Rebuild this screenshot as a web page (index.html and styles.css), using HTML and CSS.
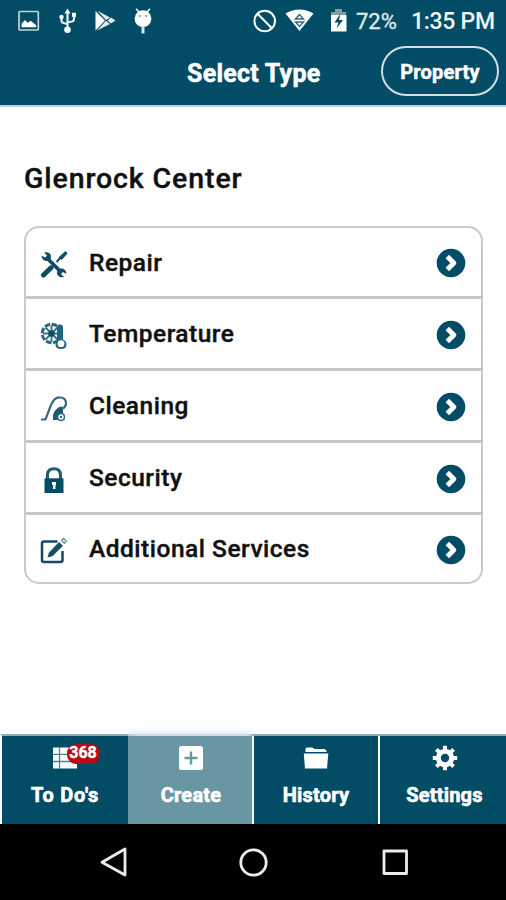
FILE: index.html
```html
<!DOCTYPE html>
<html lang="en">
<head>
<meta charset="utf-8">
<title>Select Type</title>
<link rel="stylesheet" href="styles.css">
</head>
<body>
<svg width="0" height="0" class="defs">
  <symbol id="go" viewBox="0 0 30 30"><circle cx="15" cy="15" r="14.3" fill="#034c66"/><path d="M11.300 8.500l6.500 6.500-6.500 6.500" fill="none" stroke="#fff" stroke-width="5" stroke-linejoin="round"/></symbol>
</svg>
<header class="top">
  <div class="status">
    <svg class="notifications" width="160" height="40" viewBox="0 0 160 40">
      <rect x="19" y="11.500" width="19.300" height="18.500" rx="1" fill="none" stroke="#c2d3da" stroke-width="1.700"/>
      <path d="M21.500 27.300v-3.500l3.500-3.800 2.700 2.800 3-2 5.500 4.500v2z" fill="#fff"/>
      <g fill="none" stroke="#e6eef1" stroke-width="2.200"><path d="M67.500 11v18M61.500 17v3.500q0 2 2 2.500l4 1M74 15v4q0 2-2 2.500l-4.500 1"/></g>
      <path d="M64.500 13.500l3-5 3 5z" fill="#fff"/><circle cx="67.500" cy="29.700" r="3.300" fill="#fff"/><circle cx="61.500" cy="17" r="2.200" fill="#fff"/><path d="M72 12.800h4v4h-4z" fill="#fff"/>
      <path d="M95.500 11v19.500l9.500-10z" fill="#fff"/><path d="M97.500 10.800l12.500 6.700-4 2.500zM97 30.500l13-6.500-4-3.200zM107.500 20.500l3.500-3 4.500 3-4.500 3z" fill="#dfe9ed"/>
      <circle cx="143" cy="18.700" r="8.400" fill="#fff"/><path d="M138.700 12l-2.500-3.200M147.300 12l2.500-3.200" stroke="#fff" stroke-width="1.500"/><path d="M143 26v7.500" stroke="#d6e2e7" stroke-width="3"/><circle cx="139.800" cy="16" r="1" fill="#6e8e9b"/><circle cx="146.200" cy="16" r="1" fill="#6e8e9b"/>
    </svg>
    <svg class="system" width="104" height="40" viewBox="250 0 104 40">
      <circle cx="264.700" cy="21" r="10.300" fill="none" stroke="#fff" stroke-width="2"/><path d="M257.500 13.800l14.400 14.400" stroke="#fff" stroke-width="2"/>
      <path d="M285.500 13.500q14-8 28 0L299.500 31z" fill="#fff"/><path d="M295.500 19l4-4.500 4 4.500zM295.500 22h8l-4 4.500z" fill="none" stroke="#31677c" stroke-width="1.400"/>
      <path d="M335 9h7v3h4v6h-15v-6h4z" fill="#7f9ea9"/><path d="M331 15h15.500v16.500H331z" fill="#fff"/><path d="M340.500 13.500l-6 9h4l-2 6 6.500-8.500h-4z" fill="#034c66"/>
    </svg>
    <span class="battery">72%</span>
    <span class="clock">1:35 PM</span>
  </div>
  <div class="bar">
    <h1>Select Type</h1>
    <button class="property">Property</button>
  </div>
</header>
<main>
  <h2>Glenrock Center</h2>
  <ul class="types">
    <li>
      <svg class="kind" width="28" height="28" viewBox="0 0 28 28"><path d="M8 9l12 12" stroke="#124a65" stroke-width="3.800"/><path d="M4 2.500q6-1 7 3.500l-.5 4L7 11Q2 11 1.500 5.500L5 7.500 7 5.500zM24 27q-6 1-7-3.500l.5-4L21 18.500q5 0 5.500 5.500L23 22l-2 2z" fill="#124a65"/><path d="M3.500 25l7.500-7.200" stroke="#124a65" stroke-width="5" stroke-linecap="round"/><path d="M16.500 12l4-4.500" stroke="#124a65" stroke-width="2"/><path d="M19 7.500L25.500 1.500l1.500 2L21.500 9.500z" fill="#124a65" stroke="#124a65"/></svg>
      <span>Repair</span><svg class="go"><use href="#go"/></svg>
    </li>
    <li>
      <svg class="kind" width="28" height="28" viewBox="0 0 28 28"><circle cx="11.500" cy="11.500" r="9.300" fill="none" stroke="#2c6a82" stroke-width="3" stroke-dasharray="5.700 1.600"/><path d="M11.500 3v17M3 11.500h17M5.500 5.500l12 12M17.500 5.500l-12 12" stroke="#397187" stroke-width="1.900"/><circle cx="11.500" cy="11.500" r="3.200" fill="#124a65"/><path d="M17 5q0-2.500 3-2.500T23 5v12.500q3.500 1.500 3.500 5 0 4.500-5.500 4.500t-5.500-4.500q0-2.500 1.500-4z" fill="#216680"/><circle cx="21" cy="21.700" r="3.400" fill="#fff"/></svg>
      <span>Temperature</span><svg class="go"><use href="#go"/></svg>
    </li>
    <li>
      <svg class="kind" width="28" height="28" viewBox="0 0 28 28"><path d="M1 25.500h4.500L11 11Q14.500 3 20 3.500q6.500 0 6 7-1 2.500-3 4" fill="none" stroke="#376980" stroke-width="2.200"/><path d="M13 26v-5q2-7 8-8.500 2 0 2 3v4l1.500 1v5.500z" fill="#185c76"/><circle cx="21" cy="23" r="3.400" fill="#fff" stroke="#286880" stroke-width="1.500"/><path d="M20 22h2v2h-2z" fill="#286880"/></svg>
      <span>Cleaning</span><svg class="go"><use href="#go"/></svg>
    </li>
    <li>
      <svg class="kind" width="28" height="28" viewBox="0 0 28 28"><path d="M7.500 13V9q0-6.200 6.500-6.200T20.500 9v4" fill="none" stroke="#245b72" stroke-width="3"/><path d="M4.500 12.300h19V27h-19z" fill="#034c66"/><path d="M12 16h4v2.500l-.5 1V23h-2.500v-4H12z" fill="#fff"/></svg>
      <span>Security</span><svg class="go"><use href="#go"/></svg>
    </li>
    <li>
      <svg class="kind" width="28" height="28" viewBox="0 0 28 28"><path d="M17.500 4.500H4Q2 4.500 2 6.500V23q0 2 2 2h16.500q2 0 2-2v-9" fill="none" stroke="#164964" stroke-width="2.500"/><path d="M7.500 20.500l1.300-4.700L19 5l4 3.700L12.500 19.300z" fill="#174e68"/><path d="M21.500 3.500l2-2 2.800 2.800-2 2z" fill="none" stroke="#608da0" stroke-width="1.300"/></svg>
      <span>Additional Services</span><svg class="go"><use href="#go"/></svg>
    </li>
  </ul>
</main>
<nav class="tabs">
  <a class="tab">
    <span class="icon"><svg width="26" height="26" viewBox="0 0 26 26"><path d="M1 2.500h24v21H1z" fill="#fff"/><path d="M7.500 2v22M1 9.300h24M1 16.500h24" stroke="#4f8193" stroke-width="1.300"/></svg><b class="badge">368</b></span>
    <span class="label todo">To Do's</span>
  </a>
  <a class="tab active">
    <span class="icon"><svg width="26" height="26" viewBox="0 0 26 26"><rect x="1" y="1" width="24" height="24" rx="2.500" fill="#fff"/><path d="M13 6.500v13M6.500 13h13" stroke="#6896a3" stroke-width="2.400"/></svg></span>
    <span class="label">Create</span>
  </a>
  <a class="tab">
    <span class="icon"><svg width="26" height="26" viewBox="0 0 26 26"><path d="M2.500 6V4q0-1.500 1.500-1.500h5q1.500 0 2.200 1.500H21q2 0 2.500 2v1H2.500z" fill="#fff"/><path d="M.8 8.500h24.500L24 23.500H2z" fill="#fff"/></svg></span>
    <span class="label">History</span>
  </a>
  <a class="tab settings">
    <span class="icon"><svg width="26" height="26" viewBox="0 0 26 26"><circle cx="13" cy="13" r="6.700" fill="none" stroke="#fff" stroke-width="5"/><g stroke="#fff" stroke-width="4"><path d="M13 .8v4M13 21.200v4M.8 13h4M21.200 13h4M4.400 4.400l2.800 2.800M18.800 18.800l2.800 2.800M4.400 21.600l2.800-2.800M18.800 7.200l2.800-2.800"/></g></svg></span>
    <span class="label">Settings</span>
  </a>
</nav>
<footer class="system-nav">
  <svg width="506" height="76" viewBox="0 0 506 76" fill="none" stroke="#ececec" stroke-width="2.800" stroke-linejoin="round">
    <path d="M125 25v26L102 38.300z"/><circle cx="253.500" cy="38.500" r="12.700"/><rect x="384" y="27" width="22.500" height="22.500"/>
  </svg>
</footer>
</body>
</html>
```
FILE: styles.css
```css
* { box-sizing: border-box; }
body {
  margin: 0;
  width: 506px;
  height: 900px;
  display: flex;
  flex-direction: column;
  overflow: hidden;
  background: #fff;
  font-family: Roboto, "Liberation Sans", sans-serif;
}
svg { display: block; flex: none; }
.defs { position: absolute; }
.top {
  height: 107px;
  background: #034c66;
  border-bottom: 2px solid #c5cfd6;
  color: #fff;
}
.status { height: 40px; display: flex; align-items: center; }
.system { margin-left: 90px; }
.battery { width: 57px; padding: 3px 0 0 2px; font-size: 22px; line-height: 26px; color: #e0e9ed; -webkit-text-stroke: 0.3px; white-space: nowrap; }
.clock { padding-top: 3px; font-size: 23px; line-height: 26px; font-weight: 500; letter-spacing: -0.3px; color: #f0f5f7; white-space: nowrap; }
.bar {
  height: 65px;
  padding: 6px 7px 0 0;
  display: grid;
  grid-template-columns: 381px 118px;
}
h1 { margin: 0; padding: 12px 0 0 187px; font-size: 25px; line-height: 31px; font-weight: 700; letter-spacing: 0.25px; -webkit-text-stroke: 0.5px; white-space: nowrap; }
.property {
  height: 50px;
  padding: 2px 0 0;
  border: 2px solid #d2dfe4;
  border-radius: 25px;
  background: none;
  color: #fff;
  font: 700 20px/44px Roboto, "Liberation Sans", sans-serif;
  letter-spacing: 0.2px;
  -webkit-text-stroke: 0.5px;
}
main { height: 627px; padding: 55px 23px 0 24px; }
h2 { margin: 0; font-size: 28.500px; line-height: 33px; font-weight: 500; letter-spacing: 0.9px; color: #111; -webkit-text-stroke: 0.4px; white-space: nowrap; }
.types {
  list-style: none;
  margin: 31px 0 0;
  padding: 0;
  height: 358px;
  display: grid;
  grid-template-rows: 71px 72px 72px 72px 1fr;
  border: 2px solid #c9c9c9;
  border-radius: 15px;
}
.types li {
  display: grid;
  grid-template-columns: 49px 1fr 30px;
  align-items: center;
  padding: 2px 15px 0 14px;
  border-bottom: 3px solid #c6c6c6;
}
.types li:last-child { border-bottom: 0; }
.types span { margin-top: -1px; font-size: 24.500px; line-height: 30px; font-weight: 500; letter-spacing: 0.5px; color: #111; -webkit-text-stroke: 0.4px; white-space: nowrap; }
.kind { margin-top: 3px; }
.types li:first-child .kind { margin-top: 2px; }
.go { width: 30px; height: 30px; }
.tabs {
  height: 90px;
  display: grid;
  grid-template-columns: 126px 124px 126px 1fr;
  border-top: 2px solid #8eafba;
  border-left: 2px solid #fff;
  background: #034c66;
}
.tab { display: flex; flex-direction: column; align-items: center; padding-top: 9px; color: #fff; }
.tab + .tab { border-left: 2px solid #fff; }
.tab.active { border-left: 0; padding-left: 2px; background: #6896a3; box-shadow: 0 -4px 7px #e0e5ec; clip-path: inset(-12px 0 0 0); }
.icon { position: relative; display: block; height: 26px; }
.badge {
  position: absolute;
  left: 14.500px;
  top: -1px;
  width: 33px;
  height: 20px;
  border-radius: 9px;
  background: #b90b11;
  font-size: 16px;
  line-height: 17px;
  font-weight: 700;
  text-align: center;
  -webkit-text-stroke: 0.4px;
}
.label { margin-top: 12px; font-size: 20px; line-height: 24px; font-weight: 700; letter-spacing: 0.2px; -webkit-text-stroke: 0.6px; white-space: nowrap; }
.todo { letter-spacing: 0.75px; }
.settings { padding-left: 3px; }
.system-nav { height: 76px; background: #000; }
```
